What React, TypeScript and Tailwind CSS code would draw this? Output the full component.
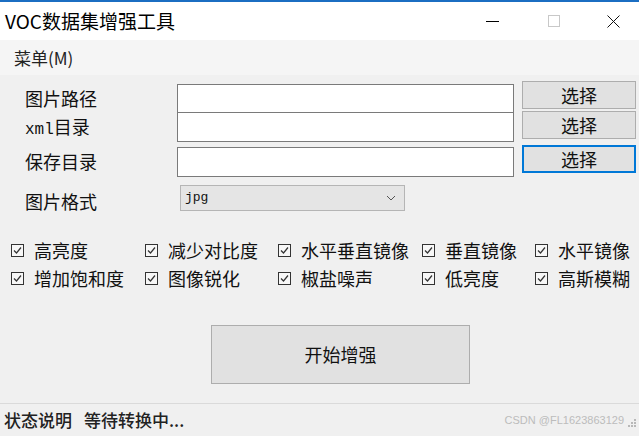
const CJK = "font-['Noto_Sans_CJK_SC','Noto_Sans',sans-serif]";

const rows1 = ["高亮度", "减少对比度", "水平垂直镜像", "垂直镜像", "水平镜像"];
const rows2 = ["增加饱和度", "图像锐化", "椒盐噪声", "低亮度", "高斯模糊"];

function Check({ label }: { label: string }) {
  return (
    <div className="flex items-center">
      <span className="w-[13px] h-[13px] border border-[#333] bg-[#f7f7f7] flex items-center justify-center">
        <svg width="11" height="11" viewBox="0 0 11 11" fill="none">
          <path d="M2 5.5 L4.5 8 L9 2.5" stroke="#333" strokeWidth="1.2" />
        </svg>
      </span>
      <span className="ml-[10px] text-[18px] leading-[20px] text-[#111] whitespace-nowrap">{label}</span>
    </div>
  );
}

function CheckRow({ items }: { items: string[] }) {
  return (
    <div className="h-[28px] grid grid-cols-[134px_133px_144px_113px_1fr] items-center pl-[11px]">
      {items.map((t) => (
        <Check key={t} label={t} />
      ))}
    </div>
  );
}

function PathRow({
  label,
  labelClass,
  h,
  inputTop,
  focused,
}: {
  label: React.ReactNode;
  labelClass: string;
  h: string;
  inputTop: string;
  focused?: boolean;
}) {
  return (
    <div className={`flex items-start ${h}`}>
      <div className={`w-[177px] pl-[25px] ${labelClass}`}>{label}</div>
      <div className={`w-[337px] h-[30px] bg-white border border-[#7a7a7a] ${inputTop}`} />
      <button
        className={`ml-[8px] w-[114px] h-[28px] bg-[#e1e1e1] text-[18px] leading-[24px] text-[#111] ${
          focused ? "border-2 border-[#0078d7]" : "border border-[#adadad]"
        }`}
      >
        选择
      </button>
    </div>
  );
}

function Grip() {
  const dots = [
    [6, 0],
    [3, 3],
    [6, 3],
    [0, 6],
    [3, 6],
    [6, 6],
  ];
  return (
    <svg width="8" height="8" viewBox="0 0 8 8" className="mr-[3px] mt-[6px]">
      {dots.map(([x, y]) => (
        <rect key={`${x}-${y}`} x={x} y={y} width="2" height="2" fill="#b8b8b8" />
      ))}
    </svg>
  );
}

export default function App() {
  return (
    <div className={`w-[639px] h-[436px] bg-[#f0f0f0] flex flex-col overflow-hidden ${CJK}`}>
      {/* title bar */}
      <div className="h-[2px] bg-[#1b6ec2]" />
      <div className="h-[38px] bg-white flex items-center">
        <span className="pl-[5px] text-[19px] leading-[22px] text-black">VOC数据集增强工具</span>
        <div className="ml-auto flex items-center h-full">
          <div className="w-[58px] flex justify-center">
            <span className="w-[13px] h-px bg-black" />
          </div>
          <div className="w-[66px] flex justify-center">
            <span className="w-[12px] h-[12px] border border-[#c8c8c8]" />
          </div>
          <div className="w-[52px] flex justify-center">
            <svg width="13" height="13" viewBox="0 0 13 13">
              <path d="M0.5 0.5 L12.5 12.5 M12.5 0.5 L0.5 12.5" stroke="#111" strokeWidth="1" />
            </svg>
          </div>
        </div>
      </div>

      {/* menu */}
      <div className="h-[35px] bg-[#f5f5f5] flex items-center">
        <span className="pl-[14px] text-[17px] leading-[20px] text-[#222]">菜单(M)</span>
      </div>

      {/* form */}
      <div className="flex-1 flex flex-col">
        <div className="mt-[6px]" />
        <PathRow
          label="图片路径"
          labelClass="mt-[7px] text-[18px] leading-[20px] text-[#111]"
          h="h-[30px]"
          inputTop="mt-[3px]"
        />
        <PathRow
          label={
            <span className="text-[#111]">
              <span className="font-['Liberation_Mono',monospace] text-[16px]">xml</span>
              <span className="text-[18px]">目录</span>
            </span>
          }
          labelClass="mt-[5px] leading-[20px]"
          h="h-[34px]"
          inputTop="mt-[1px]"
        />
        <PathRow
          label="保存目录"
          labelClass="mt-[6px] text-[18px] leading-[20px] text-[#111]"
          h="h-[40px]"
          inputTop="mt-[2px]"
          focused
        />
        <div className="flex items-start h-[26px]">
          <div className="w-[177px] pl-[25px] mt-[6px] text-[18px] leading-[20px] text-[#111]">图片格式</div>
          <div className="ml-[3px] w-[225px] h-[26px] bg-[#e5e5e5] border border-[#b5b5b5] flex items-center">
            <span className="pl-[4px] font-['Liberation_Mono',monospace] text-[13px] text-[#111]">jpg</span>
            <svg className="ml-auto mr-[8px]" width="10" height="6" viewBox="0 0 10 6" fill="none">
              <path d="M1 1 L5 5 L9 1" stroke="#555" strokeWidth="1" />
            </svg>
          </div>
        </div>

        <div className="mt-[25px]">
          <CheckRow items={rows1} />
          <CheckRow items={rows2} />
        </div>

        <button className="mt-[33px] ml-[211px] w-[259px] h-[59px] bg-[#e1e1e1] border border-[#adadad] text-[18px] text-[#111]">
          开始增强
        </button>
      </div>

      {/* status bar */}
      <div className="h-[33px] border-t border-[#dadada] flex items-center">
        <span className="pl-[4px] text-[17px] leading-[20px] font-medium text-[#222]">状态说明</span>
        <span className="ml-[12px] text-[17px] leading-[20px] font-medium text-[#222]">等待转换中...</span>
        <span className="ml-auto mr-[4px] text-[11px] text-[#bcbcbc] font-['Liberation_Sans',sans-serif]">
          CSDN @FL1623863129
        </span>
        <Grip />
      </div>
    </div>
  );
}
